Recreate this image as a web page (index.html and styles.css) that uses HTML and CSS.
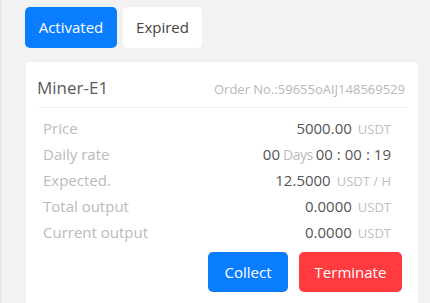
FILE: index.html
```html
<!DOCTYPE html>
<html>
<head>
<meta charset="utf-8">
<link rel="stylesheet" href="styles.css">
</head>
<body>
<div class="page">
  <div class="tabs">
    <div class="tab tab-active">Activated</div>
    <div class="tab">Expired</div>
  </div>
  <div class="card">
    <div class="card-head">
      <span class="name">Miner-E1</span>
      <span class="order">Order No.:59655oAIJ148569529</span>
    </div>
    <div class="rows">
      <div class="row"><span class="label">Price</span><span class="val">5000.00<span class="unit">USDT</span></span></div>
      <div class="row"><span class="label">Daily rate</span><span class="val">00<span class="days">Days</span>00<span class="colon">:</span>00<span class="colon">:</span>19</span></div>
      <div class="row"><span class="label">Expected.</span><span class="val">12.5000<span class="unit">USDT / H</span></span></div>
      <div class="row"><span class="label">Total output</span><span class="val">0.0000<span class="unit">USDT</span></span></div>
      <div class="row"><span class="label">Current output</span><span class="val">0.0000<span class="unit">USDT</span></span></div>
    </div>
    <div class="actions">
      <div class="btn btn-blue">Collect</div>
      <div class="btn btn-red">Terminate</div>
    </div>
  </div>
</div>
</body>
</html>
```

FILE: styles.css
```css
html, body {
  margin: 0;
  padding: 0;
  height: 100%;
}
body {
  background: #f2f2f2;
  font-family: "Open Sans", "Noto Sans", sans-serif;
  border-left: 2px solid #e4e7ee;
  box-sizing: border-box;
  overflow: hidden;
}
.page {
  padding: 7px 12px 0 23px;
}
.tabs {
  display: flex;
  gap: 6px;
}
.tab {
  height: 41px;
  line-height: 41px;
  border-radius: 5px;
  background: #fff;
  color: #444;
  font-size: 15px;
  text-align: center;
  width: 79px;
}
.tab-active {
  background: #0a7dff;
  color: #fff;
  width: 92px;
}
.card {
  margin-top: 14px;
  margin-left: 1px;
  background: #fff;
  border-radius: 3px 3px 0 0;
  padding: 0 10px 0 11px;
  height: 241px;
  overflow: hidden;
}
.card-head {
  display: flex;
  justify-content: space-between;
  align-items: center;
  padding: 14px 0 7px;
  border-bottom: 1px solid #f2f2f2;
}
.name {
  font-size: 17px;
  line-height: 24px;
  color: #5a5a5a;
}
.order {
  font-size: 13px;
  color: #b8b8b8;
  margin-top: 2px;
  margin-right: 3px;
}
.rows {
  padding: 7px 17px 0 6px;
}
.row {
  display: flex;
  justify-content: space-between;
  align-items: center;
  height: 26px;
}
.label {
  font-size: 15px;
  color: #bababa;
}
.val {
  font-size: 15px;
  color: #555;
}
.unit {
  font-size: 13px;
  color: #c0c0c0;
  margin-left: 6px;
}
.days {
  font-size: 14px;
  color: #bababa;
  margin: 0 3px;
  letter-spacing: -0.5px;
}
.colon {
  margin: 0 4px;
}
.actions {
  display: flex;
  justify-content: flex-end;
  gap: 11px;
  padding: 7px 6px 0 0;
}
.btn {
  height: 40px;
  line-height: 40px;
  border-radius: 5px;
  color: #fff;
  font-size: 15px;
  text-align: center;
}
.btn-blue {
  background: #0a7dff;
  width: 80px;
}
.btn-red {
  background: #ff3b3f;
  width: 103px;
}
```
